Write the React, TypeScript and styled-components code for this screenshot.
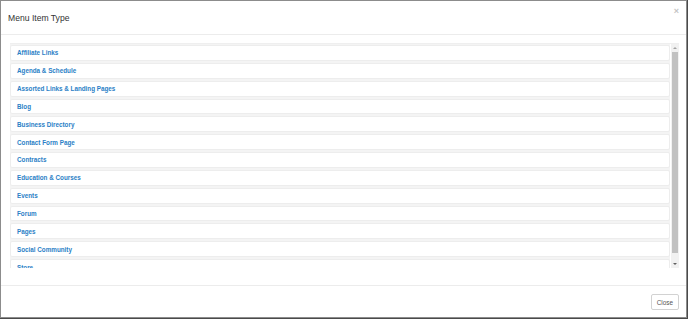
import React from 'react'
import styled, { createGlobalStyle } from 'styled-components'

const GlobalStyle = createGlobalStyle`
  html, body {
    margin: 0;
    padding: 0;
    background: #4a4a4a;
    font-family: "Liberation Sans", Arial, sans-serif;
  }
`

const Page = styled.div`
  width: 688px;
  height: 319px;
  box-sizing: border-box;
  padding: 0 1px 1px 0;
  background: #4a4a4a;
`

const Modal = styled.div`
  width: 687px;
  height: 318px;
  box-sizing: border-box;
  background: #fff;
  border: 1px solid #8c8c8c;
  display: flex;
  flex-direction: column;
`

const Header = styled.div`
  height: 34px;
  border-bottom: 1px solid #ececec;
  display: flex;
  align-items: center;
  justify-content: space-between;
  padding: 0 7px 0 7px;
`

const Title = styled.h4`
  margin: 0;
  font-size: 8.6px;
  font-weight: normal;
  color: #333;
`

const CloseX = styled.span`
  font-size: 9px;
  line-height: 1;
  color: #c4c4c4;
  font-weight: bold;
  align-self: flex-start;
  margin-top: 6px;
`

const Body = styled.div`
  flex: 1;
  padding: 8px 7px 17px 9px;
`

const ListBox = styled.div`
  height: 224px;
  display: flex;
  border-top: 1px solid #efefef;
  overflow: hidden;
`

const Items = styled.div`
  flex: 1;
  display: flex;
  flex-direction: column;
  gap: 2px;
  background: #f4f4f4;
  padding-top: 1px;
  margin-right: 1px;
`

const Item = styled.div`
  flex: 0 0 auto;
  height: 15.85px;
  box-sizing: border-box;
  background: #fff;
  border: 1px solid #ededed;
  border-radius: 2px;
  display: flex;
  align-items: center;
  padding-left: 6px;
  font-size: 6.3px;
  font-weight: bold;
  color: #2a80c6;
`

const Scrollbar = styled.div`
  width: 8px;
  background: #f1f1f1;
  display: flex;
  flex-direction: column;
  align-items: center;
`

const Arrow = styled.div<{ down?: boolean }>`
  height: 8px;
  display: flex;
  align-items: center;
  justify-content: center;
  &::after {
    content: '';
    border-left: 2px solid transparent;
    border-right: 2px solid transparent;
    ${({ down }) => (down ? 'border-top: 2px solid #606060;' : 'border-bottom: 2px solid #a3a3a3;')}
  }
`

const Thumb = styled.div`
  flex: 1;
  width: 6px;
  background: #c1c1c1;
  margin-bottom: 7px;
`

const Footer = styled.div`
  border-top: 1px solid #ececec;
  display: flex;
  justify-content: flex-end;
  padding: 8px 7px 7px;
`

const Button = styled.button`
  height: 16px;
  padding: 0 5px;
  background: #fff;
  border: 1px solid #d2d2d2;
  border-radius: 2px;
  font-family: "Liberation Sans", Arial, sans-serif;
  font-size: 6.4px;
  color: #555;
`

const items = [
  'Affiliate Links',
  'Agenda & Schedule',
  'Assorted Links & Landing Pages',
  'Blog',
  'Business Directory',
  'Contact Form Page',
  'Contracts',
  'Education & Courses',
  'Events',
  'Forum',
  'Pages',
  'Social Community',
  'Store',
]

const App: React.FC = () => (
  <Page>
    <GlobalStyle />
    <Modal>
      <Header>
        <Title>Menu Item Type</Title>
        <CloseX>×</CloseX>
      </Header>
      <Body>
        <ListBox>
          <Items>
            {items.map((label) => (
              <Item key={label}>{label}</Item>
            ))}
          </Items>
          <Scrollbar>
            <Arrow />
            <Thumb />
            <Arrow down />
          </Scrollbar>
        </ListBox>
      </Body>
      <Footer>
        <Button>Close</Button>
      </Footer>
    </Modal>
  </Page>
)

export default App
